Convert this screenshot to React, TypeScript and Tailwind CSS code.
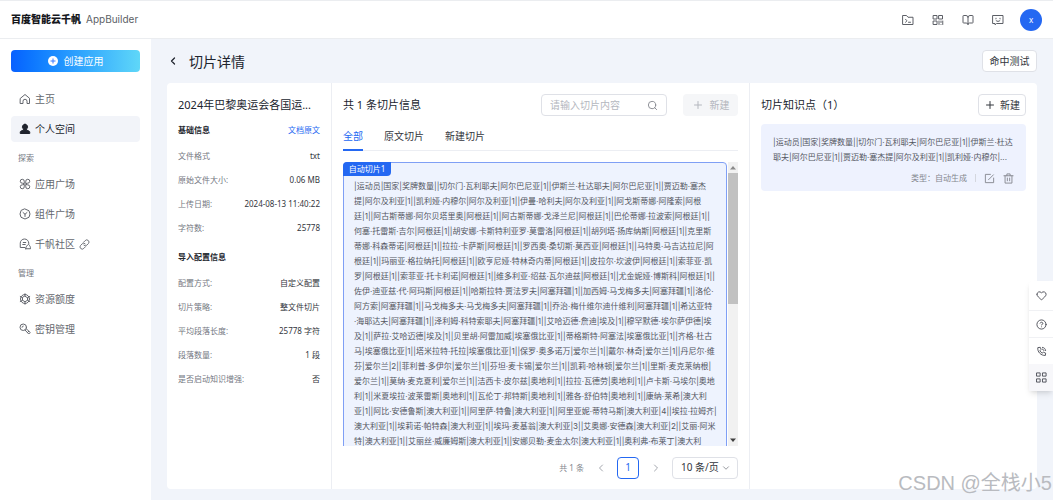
import type { ReactNode } from "react"
import {
  BookOpen,
  ChevronDown,
  ChevronLeft,
  ChevronRight,
  CircleHelp,
  Heart,
  Plus,
  Search,
} from "lucide-react"

const sliceLines = [
  "|运动员|国家|奖牌数量||切尔门·瓦利耶夫|阿尔巴尼亚|1||伊斯兰·杜达耶夫|阿尔巴尼亚|1||贾迈勒·塞杰",
  "提|阿尔及利亚|1||凯利娅·内穆尔|阿尔及利亚|1||伊曼·哈利夫|阿尔及利亚|1||阿戈斯蒂娜·阿隆索|阿根",
  "廷|1||阿古斯蒂娜·阿尔贝塔里奥|阿根廷|1||阿古斯蒂娜·戈泽兰尼|阿根廷|1||巴伦蒂娜·拉波索|阿根廷|1||",
  "何塞·托雷斯·吉尔|阿根廷|1||胡安娜·卡斯特利亚罗·莫雷洛|阿根廷|1||胡列塔·扬库纳斯|阿根廷|1||克里斯",
  "蒂娜·科森蒂诺|阿根廷|1||拉拉·卡萨斯|阿根廷|1||罗西奥·桑切斯·莫西亚|阿根廷|1||马特奥·马吉达拉尼|阿",
  "根廷|1||玛丽亚·格拉纳托|阿根廷|1||欧亨尼娅·特林奇内蒂|阿根廷|1||皮拉尔·坎波伊|阿根廷|1||索菲亚·凯",
  "罗|阿根廷|1||索菲亚·托卡利诺|阿根廷|1||维多利亚·绍兹·瓦尔迪兹|阿根廷|1||尤金妮娅·博斯科|阿根廷|1||",
  "佐伊·迪亚兹·代·阿玛斯|阿根廷|1||哈斯拉特·贾法罗夫|阿塞拜疆|1||加西姆·马戈梅多夫|阿塞拜疆|1||洛伦·",
  "阿方索|阿塞拜疆|1||马戈梅多夫·马戈梅多夫|阿塞拜疆|1||乔治·梅什维尔迪什维利|阿塞拜疆|1||希达亚特",
  "·海耶达夫|阿塞拜疆|1||泽利姆·科特索耶夫|阿塞拜疆|1||艾哈迈德·詹迪|埃及|1||穆罕默德·埃尔萨伊德|埃",
  "及|1||萨拉·艾哈迈德|埃及|1||贝里胡·阿雷加威|埃塞俄比亚|1||蒂格斯特·阿塞法|埃塞俄比亚|1||齐格·杜古",
  "马|埃塞俄比亚|1||塔米拉特·托拉|埃塞俄比亚|1||保罗·奥多诺万|爱尔兰|1||戴尔·林奇|爱尔兰|1||丹尼尔·维",
  "芬|爱尔兰|2||菲利普·多伊尔|爱尔兰|1||芬坦·麦卡锡|爱尔兰|1||凯莉·哈林顿|爱尔兰|1||里斯·麦克莱纳根|",
  "爱尔兰|1||莫纳·麦克夏利|爱尔兰|1||洁西卡·皮尔兹|奥地利|1||拉拉·瓦德劳|奥地利|1||卢卡斯·马埃尔|奥地",
  "利|1||米夏埃拉·波莱雷斯|奥地利|1||瓦伦丁·邦特斯|奥地利|1||雅各·舒伯特|奥地利|1||康纳·莱希|澳大利",
  "亚|1||阿比·安德鲁斯|澳大利亚|1||阿里萨·特鲁|澳大利亚|1||阿里亚妮·蒂特马斯|澳大利亚|4||埃拉·拉姆齐|",
  "澳大利亚|1||埃莉诺·帕特森|澳大利亚|1||埃玛·麦基翁|澳大利亚|3||艾奥娜·安德森|澳大利亚|2||艾丽·阿米",
  "特|澳大利亚|1||艾丽丝·威廉姆斯|澳大利亚|1||安娜贝勒·麦金太尔|澳大利亚|1||奥利弗·布莱丁|澳大利",
]

const pointLines = [
  "|运动员|国家|奖牌数量||切尔门·瓦利耶夫|阿尔巴尼亚|1||伊斯兰·杜达",
  "耶夫|阿尔巴尼亚|1||贾迈勒·塞杰提|阿尔及利亚|1||凯利娅·内穆尔|...",
]

const baseInfo = [
  { label: "文件格式", value: "txt" },
  { label: "原始文件大小:", value: "0.06 MB" },
  { label: "上传日期:", value: "2024-08-13 11:40:22" },
  { label: "字符数:", value: "25778" },
]

const importInfo = [
  { label: "配置方式:", value: "自定义配置" },
  { label: "切片策略:", value: "整文件切片" },
  { label: "平均段落长度:", value: "25778 字符" },
  { label: "段落数量:", value: "1 段" },
  { label: "是否启动知识增强:", value: "否" },
]

const Icon = ({ children, size = 12 }: { children: ReactNode; size?: number }) => (
  <svg
    width={size}
    height={size}
    viewBox="0 0 24 24"
    fill="none"
    stroke="currentColor"
    strokeWidth={2}
    strokeLinejoin="round"
    strokeLinecap="round"
    className="shrink-0"
    aria-hidden="true"
  >
    {children}
  </svg>
)

const HomeIcon = () => (
  <Icon>
    <path d="M3 10.500 12 3l9 7.500V21h-5v-4.500a4 4 0 0 0-8 0V21H3Z" />
  </Icon>
)

const UserIcon = () => (
  <Icon>
    <path
      d="M12 2.500a5.300 5.300 0 0 0-3 9.600v1.700l-5.500 2.700a2 2 0 0 0-1 1.800V21h19v-2.700a2 2 0 0 0-1-1.800L15 13.800v-1.700a5.300 5.300 0 0 0-3-9.600Z"
      fill="currentColor"
    />
  </Icon>
)

const AppsIcon = () => (
  <Icon>
    <path d="M10.500 10.500V6.500a4 4 0 1 0-4 4Zm3 0V6.500a4 4 0 1 1 4 4Zm-3 3v4a4 4 0 1 1-4-4Zm3 0v4a4 4 0 1 0 4-4Z" />
  </Icon>
)

const ComponentIcon = () => (
  <Icon>
    <path d="M12 2 20 5.500 22 12l-2 6.500L12 22l-8-3.500L2 12l2-6.500Z" />
    <path d="m8 9 4 3.500L16 9M12 12.500V17" />
  </Icon>
)

const CommunityIcon = () => (
  <Icon>
    <path d="M12 19H2.500v-8.500a8.500 8.500 0 0 1 17 0v1" />
    <path d="M8.500 9h5M7.500 13h5M13.500 21.500H23c.3-3-1-6-4-9-3 2-5.500 5.500-5.500 9Z" />
  </Icon>
)

const QuotaIcon = () => (
  <Icon>
    <circle cx="12" cy="12" r="9" />
    <path d="m12 6.500 5 3v5l-5 3-5-3v-5ZM12 1.500v5M17 9.500l4.500-2.500M17 14.500l4.500 2.500M12 17.500v5M7 14.500 2.500 17M7 9.500 2.500 7" />
  </Icon>
)

const KeyIcon = () => (
  <Icon>
    <circle cx="8.500" cy="8.500" r="6.500" />
    <path d="M6 8.500A2.500 2.500 0 0 1 8.500 6M12 14l7.500 8 3-3-8-7.500M17 19l2.500-2.500" />
  </Icon>
)

const LinkIcon = () => (
  <Icon size={11}>
    <path d="m10 7 3.500-3.500a4.500 4.500 0 0 1 7 6.500L17 13.500a4.500 4.500 0 0 1-6.500 0M14 17l-3.500 3.500a4.500 4.500 0 0 1-7-6.500L7 10.500a4.500 4.500 0 0 1 6.500 0" />
  </Icon>
)

const exploreItems = [
  { label: "应用广场", icon: <AppsIcon /> },
  { label: "组件广场", icon: <ComponentIcon /> },
  { label: "千帆社区", icon: <CommunityIcon />, external: true },
]

const manageItems = [
  { label: "资源额度", icon: <QuotaIcon /> },
  { label: "密钥管理", icon: <KeyIcon /> },
]

const NavItem = ({
  label,
  icon,
  active,
  external,
}: {
  label: string
  icon: ReactNode
  active?: boolean
  external?: boolean
}) => (
  <a
    href="#"
    className={`flex h-[26px] items-center gap-1 rounded px-2 text-[10px] ${
      active ? "bg-[#f2f4f9] text-[#20242e]" : "text-[#64676e]"
    }`}
  >
    {icon}
    <span>{label}</span>
    {external && <LinkIcon />}
  </a>
)

const InfoList = ({ items }: { items: { label: string; value: string }[] }) => (
  <dl>
    {items.map((item) => (
      <div key={item.label} className="flex h-6 items-center justify-between">
        <dt className="text-[#74777f]">{item.label}</dt>
        <dd className="text-[#33363d]">{item.value}</dd>
      </div>
    ))}
  </dl>
)

const Header = () => (
  <header className="flex h-[39px] shrink-0 items-center justify-between border-t border-b border-[#ebedf0] bg-white px-[11px]">
    <div className="flex items-center gap-[5px]">
      <span className="text-[10px] font-black text-[#15171c]">百度智能云千帆</span>
      <span className="font-[Inter] text-[10px] text-[#5c5f66]">AppBuilder</span>
    </div>
    <div className="flex items-center gap-[18px] text-[#5c5f66]">
      <button aria-label="控制台">
        <Icon>
          <path d="M2 3h7l3 3.500h10V21H2ZM7 10.500l3 3-3 3M13 16.500h4" />
        </Icon>
      </button>
      <button aria-label="二维码">
        <Icon>
          <path d="M3 3h7v7H3ZM14 3h7v7h-7ZM3 14h7v7H3ZM14 14v7M18 14v3M21.500 14v7M18 21h0" />
        </Icon>
      </button>
      <button aria-label="文档">
        <BookOpen className="h-3 w-3" />
      </button>
      <button aria-label="反馈">
        <Icon>
          <path d="M2 3h20v16H9l-3 2.500V19H2ZM8 8.500v1M16 8.500v1M8 13c2 2.500 6 2.500 8 0" />
        </Icon>
      </button>
      <button className="-ml-[2px] h-[22px] w-[22px] rounded-full bg-[#2468f2] text-[8px] text-white">x</button>
    </div>
  </header>
)

const Sidebar = () => (
  <aside className="w-[151px] shrink-0 bg-white px-[11px] pt-[11px]">
    <button className="flex h-[22px] w-full items-center justify-center gap-[6px] rounded bg-linear-to-r from-[#0a60ff] to-[#5fd7f8] text-[10px] text-white">
      <svg width="10" height="10" viewBox="0 0 10 10" aria-hidden="true">
        <circle cx="5" cy="5" r="5" fill="white" />
        <path d="M5 2.500v5M2.500 5h5" stroke="#3a7bff" />
      </svg>
      创建应用
    </button>
    <nav className="mt-[14px] flex flex-col gap-1">
      <NavItem label="主页" icon={<HomeIcon />} />
      <NavItem label="个人空间" icon={<UserIcon />} active />
      <h2 className="h-[21px] px-[7px] text-[8px] leading-[24px] text-[#74777f]">探索</h2>
      {exploreItems.map((item) => (
        <NavItem key={item.label} {...item} />
      ))}
      <h2 className="h-[21px] px-[7px] text-[8px] leading-[24px] text-[#74777f]">管理</h2>
      {manageItems.map((item) => (
        <NavItem key={item.label} {...item} />
      ))}
    </nav>
  </aside>
)

const FilePanel = () => (
  <section className="w-[165px] shrink-0 border-r border-[#eceef3] pt-[13px] pr-[11px] pl-[11px] text-[8px]">
    <h2 className="text-[11px] leading-[18px] whitespace-nowrap text-[#20242e]">2024年巴黎奥运会各国运...</h2>
    <div className="mt-1 mb-[2px] flex h-6 items-center justify-between">
      <h3 className="font-bold text-[#25282f]">基础信息</h3>
      <a href="#" className="text-[#2468f2]">文档原文</a>
    </div>
    <InfoList items={baseInfo} />
    <h3 className="mt-[5px] mb-[2px] h-6 leading-6 font-bold text-[#25282f]">导入配置信息</h3>
    <InfoList items={importInfo} />
  </section>
)

const SliceList = () => (
  <div className="mt-[11px] flex min-h-0 flex-1 overflow-hidden">
    <article className="min-w-0 flex-1 self-start rounded-t-sm border border-[#7f9ff5] bg-[#eef3fe]">
      <h3 className="-mt-px -ml-px h-[14px] w-12 rounded-tl-sm rounded-br-sm bg-[#2468f2] text-center text-[8px] leading-[14px] text-white">
        自动切片1
      </h3>
      <p className="mt-[3px] pb-3 pl-[10px] font-[Inter,'Noto_Sans_CJK_SC',sans-serif] text-[8px] leading-[15px] whitespace-pre text-[#53565e]">
        {sliceLines.join("\n")}
      </p>
    </article>
    <div className="ml-px flex w-[10px] flex-col items-center bg-[#f1f1f1]" aria-hidden="true">
      <svg width="10" height="11" viewBox="0 0 10 11">
        <path d="M5 4 8 7.500H2Z" fill="#8a8a8a" />
      </svg>
      <div className="h-[46%] w-full bg-[#c1c1c1]" />
      <svg width="10" height="11" viewBox="0 0 10 11" className="mt-auto">
        <path d="M5 7 8 3.500H2Z" fill="#404040" />
      </svg>
    </div>
  </div>
)

const SlicePanel = () => (
  <section className="flex min-w-0 flex-1 flex-col border-r border-[#eceef3] px-[11px] pt-[11px]">
    <div className="flex items-center">
      <h2 className="flex-1 text-[11px] text-[#20242e]">共 1 条切片信息</h2>
      <label className="flex h-[22px] w-[126px] items-center rounded border border-[#dfe1e7] px-2 text-[#84878e]">
        <input
          aria-label="搜索切片"
          placeholder="请输入切片内容"
          className="min-w-0 flex-1 text-[10px] outline-none placeholder:text-[#b4b7be]"
        />
        <Search className="h-[11px] w-[11px]" />
      </label>
      <button
        disabled
        className="ml-4 flex h-[22px] w-[55px] items-center justify-center gap-[6px] rounded bg-[#f5f6f8] text-[10px] text-[#b4b7be]"
      >
        <Plus className="h-3 w-3" />
        新建
      </button>
    </div>
    <div className="mt-[7px] flex h-7 shrink-0 gap-[21px] border-b border-[#eceef3] text-[10px] text-[#33363d]">
      <button className="-mb-px border-b-2 border-[#2468f2] text-[#2468f2]">全部</button>
      <button>原文切片</button>
      <button>新建切片</button>
    </div>
    <SliceList />
    <div className="flex h-[43px] shrink-0 items-center justify-end text-[8px] text-[#84878e]">
      <span>共 1 条</span>
      <button aria-label="上一页" className="ml-[11px]">
        <ChevronLeft className="h-3 w-3 text-[#a4a7ae]" />
      </button>
      <button className="ml-[10px] h-[22px] w-[22px] rounded border border-[#2468f2] text-[10px] text-[#2468f2]">1</button>
      <button aria-label="下一页" className="ml-[11px]">
        <ChevronRight className="h-3 w-3 text-[#a4a7ae]" />
      </button>
      <div className="relative ml-[10px] text-[10px] text-[#33363d]">
        <select aria-label="每页条数" className="h-[22px] w-[66px] appearance-none rounded border border-[#dfe1e7] bg-white pl-2">
          <option>10 条/页</option>
        </select>
        <ChevronDown className="pointer-events-none absolute top-[6px] right-[7px] h-[10px] w-[10px] text-[#84878e]" />
      </div>
    </div>
  </section>
)

const PointPanel = () => (
  <section className="w-[287px] shrink-0 px-[11px] pt-[11px]">
    <div className="flex items-center justify-between">
      <h2 className="text-[11px] text-[#20242e]">切片知识点（1）</h2>
      <button className="flex h-[22px] w-12 items-center justify-center gap-1 rounded border border-[#dfe1e7] text-[10px] text-[#33363d]">
        <Plus className="h-3 w-3" />
        新建
      </button>
    </div>
    <article className="mt-2 rounded bg-[#eef2fe] px-3 pt-[11px] pb-[6px]">
      <p className="font-[Inter,'Noto_Sans_CJK_SC',sans-serif] text-[8px] leading-[15px] whitespace-pre text-[#53565e]">
        {pointLines.join("\n")}
      </p>
      <div className="mt-[6px] flex h-[14px] items-center justify-end text-[8px] text-[#84878e]">
        <span>类型：自动生成</span>
        <span className="mx-2 h-2 w-px bg-[#d4d7de]" />
        <button aria-label="编辑">
          <Icon size={11}>
            <path d="M14 3H3v18h18V11M10 14.500 20.500 4" />
          </Icon>
        </button>
        <button aria-label="删除" className="ml-2">
          <Icon size={11}>
            <path d="M2 6h20M4.500 6v16h15V6M8.500 6V2h7v4M9.500 11v6M14.500 11v6" />
          </Icon>
        </button>
      </div>
    </article>
  </section>
)

const FloatingTools = () => (
  <div className="absolute top-[281px] right-0 w-6 rounded-l bg-white text-[#4a4d55] shadow-md">
    <button aria-label="收藏" className="flex h-[29px] w-full items-center justify-center">
      <Heart className="h-[11px] w-[11px]" />
    </button>
    <button aria-label="帮助" className="flex h-7 w-full items-center justify-center border-y border-[#f0f1f4]">
      <CircleHelp className="h-[11px] w-[11px]" />
    </button>
    <button aria-label="电话" className="flex h-[26px] w-full items-center justify-center">
      <Icon size={11}>
        <path d="M8.500 3 4 3.500c-1.500 9 7 18 16.500 17l.5-5-5-2-2.500 2c-2-1-4-3-5-5l2-2.500ZM14 3c4 .5 6.500 3 7 7M14 7c2 .3 3 1.300 3.300 3" />
      </Icon>
    </button>
    <button aria-label="更多" className="flex h-[27px] w-full items-center justify-center bg-[#f7f7fa]">
      <Icon size={11}>
        <path d="M2 2h7v7H2ZM15 2h7v7h-7ZM2 15h7v7H2ZM15 15h7v7h-7Z" />
      </Icon>
    </button>
  </div>
)

export default function App() {
  return (
    <div className="relative flex h-screen flex-col overflow-hidden bg-[#f1f4fa] font-['Noto_Sans','Noto_Sans_CJK_SC',sans-serif]">
      <Header />
      <div className="flex min-h-0 flex-1">
        <Sidebar />
        <main className="flex min-w-0 flex-1 flex-col px-4 pb-[11px]">
          <div className="flex h-11 shrink-0 items-center">
            <button aria-label="返回" className="text-[#20242e]">
              <ChevronLeft className="h-3 w-3" strokeWidth={2.5} />
            </button>
            <h1 className="ml-[10px] flex-1 text-[14px] text-[#20242e]">切片详情</h1>
            <button className="h-[22px] w-[55px] rounded border border-[#dfe1e7] bg-white text-[10px] text-[#33363d]">
              命中测试
            </button>
          </div>
          <div className="flex min-h-0 flex-1 rounded bg-white">
            <FilePanel />
            <SlicePanel />
            <PointPanel />
          </div>
        </main>
      </div>
      <FloatingTools />
      <div className="pointer-events-none absolute right-px bottom-1 font-['Liberation_Sans','Noto_Sans_CJK_SC',sans-serif] text-[20px] leading-[26px] text-[#b9bbc0]">
        CSDN @全栈小5
      </div>
    </div>
  )
}
